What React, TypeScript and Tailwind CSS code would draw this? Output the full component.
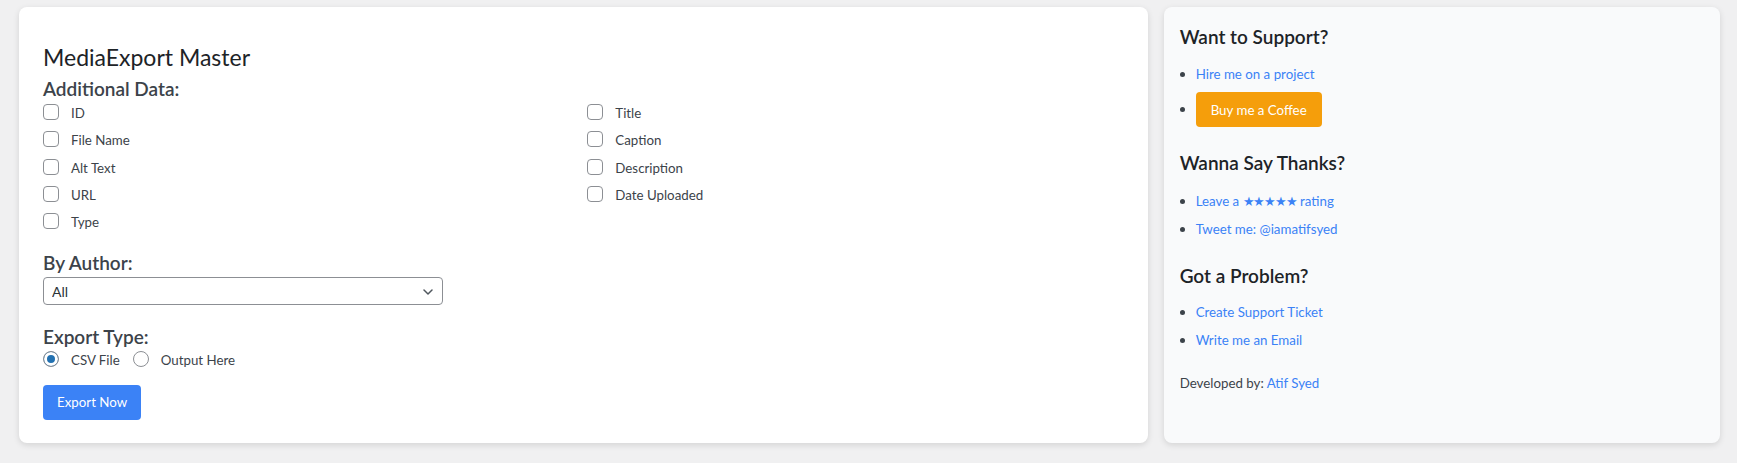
import React from "react";

const font = { fontFamily: "Lato, 'Liberation Sans', sans-serif" };

function Check({ label }: { label: string }) {
  return (
    <label className="flex items-start h-[27.25px]">
      <input
        type="checkbox"
        className="appearance-none w-4 h-4 m-0 border border-[#8c8f94] rounded bg-white shrink-0"
      />
      <span className="ml-3 text-[13.3px] leading-[18px] text-[#3c434a]">{label}</span>
    </label>
  );
}

function Radio({ label, checked }: { label: string; checked?: boolean }) {
  return (
    <label className="flex items-start">
      <input
        type="radio"
        name="etype"
        defaultChecked={checked}
        className="appearance-none w-4 h-4 m-0 border border-[#8c8f94] rounded-full bg-white shrink-0 checked:bg-[#2271b1] checked:shadow-[inset_0_0_0_3px_white]"
      />
      <span className="ml-3 text-[13.3px] leading-[18px] text-[#3c434a]">{label}</span>
    </label>
  );
}

function Dot() {
  return <span className="w-[5px] h-[5px] rounded-full bg-[#3c434a] mr-[11px] shrink-0" />;
}

function Item({ children }: { children: React.ReactNode }) {
  return (
    <li className="flex items-center text-[13.3px] leading-[18px]">
      <Dot />
      {children}
    </li>
  );
}

function Link({ children }: { children: React.ReactNode }) {
  return (
    <a href="#" className="text-[#3b82f6] no-underline">
      {children}
    </a>
  );
}

export default function App() {
  const left = ["ID", "File Name", "Alt Text", "URL", "Type"];
  const right = ["Title", "Caption", "Description", "Date Uploaded"];
  const items: string[] = [];
  for (let i = 0; i < left.length; i++) {
    items.push(left[i]);
    if (right[i]) items.push(right[i]);
  }

  return (
    <div className="min-h-[463px] bg-[#f0f0f1] pt-[7px] pb-[20px] pl-[19px] pr-[17px]" style={font}>
      <div className="grid grid-cols-3 gap-4">
        <div className="col-span-2 bg-white rounded-lg shadow-[0_2px_6px_rgba(0,0,0,0.12)] px-6 pt-[35px] pb-[23px]">
          <h2 className="text-[23px] leading-[30px] font-normal text-[#1d2327]">MediaExport Master</h2>
          <h3 className="mt-[5px] text-[19px] leading-[24px] font-semibold text-[#3c434a]">Additional Data:</h3>
          <div className="mt-[3px] grid grid-cols-2 gap-x-2">
            {items.map((l) => (
              <Check key={l} label={l} />
            ))}
          </div>
          <h3 className="mt-[11px] text-[19px] leading-[24px] font-semibold text-[#3c434a]">By Author:</h3>
          <div className="relative mt-[2px] w-[400px]">
            <select className="appearance-none w-full h-[28px] border border-[#8c8f94] rounded bg-white pl-2 pr-8 text-[14px] text-[#2c3338] outline-none">
              <option>All</option>
            </select>
            <svg
              className="absolute right-[10px] top-[12px] pointer-events-none"
              width="10"
              height="6"
              viewBox="0 0 10 6"
              fill="none"
            >
              <path d="M1 1l4 4 4-4" stroke="#50575e" strokeWidth="1.5" strokeLinecap="round" strokeLinejoin="round" />
            </svg>
          </div>
          <h3 className="mt-[20px] text-[19px] leading-[24px] font-semibold text-[#3c434a]">Export Type:</h3>
          <div className="mt-[2px] flex items-start gap-[13px]">
            <Radio label="CSV File" checked />
            <Radio label="Output Here" />
          </div>
          <button className="mt-[16px] h-[35px] px-[14px] rounded bg-[#3b82f6] text-white text-[13.3px]">Export Now</button>
        </div>

        <div className="bg-[#f9fafb] rounded-lg shadow-[0_2px_6px_rgba(0,0,0,0.12)] px-4 pt-[18px] pb-6 flex flex-col">
          <section>
            <h3 className="text-[19px] leading-[24px] font-semibold text-[#1d2327]">Want to Support?</h3>
            <ul className="mt-[16px] flex flex-col gap-[9px]">
              <Item>
                <Link>Hire me on a project</Link>
              </Item>
              <Item>
                <button className="h-[35px] px-[15px] rounded bg-[#f59e0b] text-white text-[13.3px]">Buy me a Coffee</button>
              </Item>
            </ul>
          </section>
          <section className="mt-[24px]">
            <h3 className="text-[19px] leading-[24px] font-semibold text-[#1d2327]">Wanna Say Thanks?</h3>
            <ul className="mt-[17px] flex flex-col gap-[10px]">
              <Item>
                <Link>
                  Leave a <span className="tracking-[-1.2px]">★★★★★</span> rating
                </Link>
              </Item>
              <Item>
                <Link>Tweet me: @iamatifsyed</Link>
              </Item>
            </ul>
          </section>
          <section className="mt-[26px]">
            <h3 className="text-[19px] leading-[24px] font-semibold text-[#1d2327]">Got a Problem?</h3>
            <ul className="mt-[15px] flex flex-col gap-[10px]">
              <Item>
                <Link>Create Support Ticket</Link>
              </Item>
              <Item>
                <Link>Write me an Email</Link>
              </Item>
            </ul>
          </section>
          <p className="mt-[25px] text-[13.3px] leading-[18px] text-[#3c434a]">
            Developed by: <Link>Atif Syed</Link>
          </p>
        </div>
      </div>
    </div>
  );
}
